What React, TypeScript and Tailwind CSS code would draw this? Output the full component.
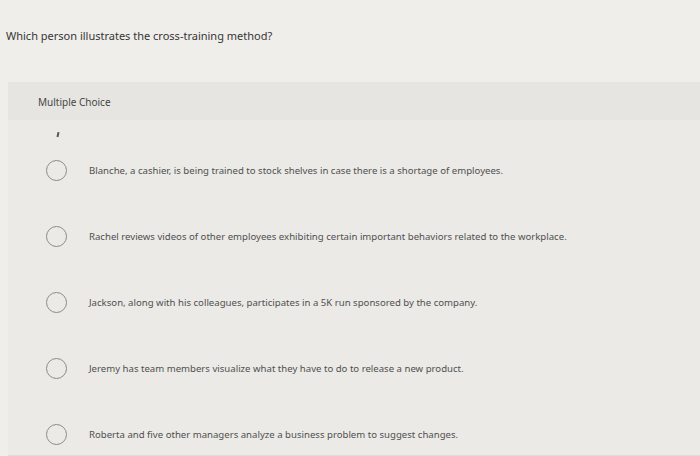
import React from 'react';

const options = [
  'Blanche, a cashier, is being trained to stock shelves in case there is a shortage of employees.',
  'Rachel reviews videos of other employees exhibiting certain important behaviors related to the workplace.',
  'Jackson, along with his colleagues, participates in a 5K run sponsored by the company.',
  'Jeremy has team members visualize what they have to do to release a new product.',
  'Roberta and five other managers analyze a business problem to suggest changes.',
];

const App: React.FC = () => {
  return (
    <div
      className="w-[700px] h-[456px] overflow-hidden bg-[#efeeea] text-[#3b3b3b]"
      style={{ fontFamily: '"Noto Sans", sans-serif' }}
    >
      {/* Question */}
      <div className="h-[82px] pt-[27px] pl-[6px]">
        <p className="text-[11px] leading-[18px] text-[#363636]">
          Which person illustrates the cross-training method?
        </p>
      </div>

      {/* Answer panel */}
      <div className="ml-[8px] h-[374px] bg-[#ebeae6] border-b border-[#dddcd7]">
        <div className="h-[38px] flex items-center pl-[30px] pt-[2px] bg-[#e6e5e1]">
          <span className="text-[10px] text-[#454545]">Multiple Choice</span>
        </div>

        <div className="h-[18px] pl-[49px] pt-[12px]">
          <span className="block w-[1.5px] h-[5px] bg-[#555] rotate-12" />
        </div>

        <div className="flex flex-col pt-[22px]">
          {options.map((text, i) => (
            <div key={i} className="h-[66px] flex items-start gap-[22px] pl-[38px]">
              <span className="w-[21px] h-[21px] shrink-0 rounded-full border-[1.5px] border-[#8a8a88]" />
              <span className="text-[9.6px] leading-[21px] text-[#505050]">{text}</span>
            </div>
          ))}
        </div>
      </div>
    </div>
  );
};

export default App;
